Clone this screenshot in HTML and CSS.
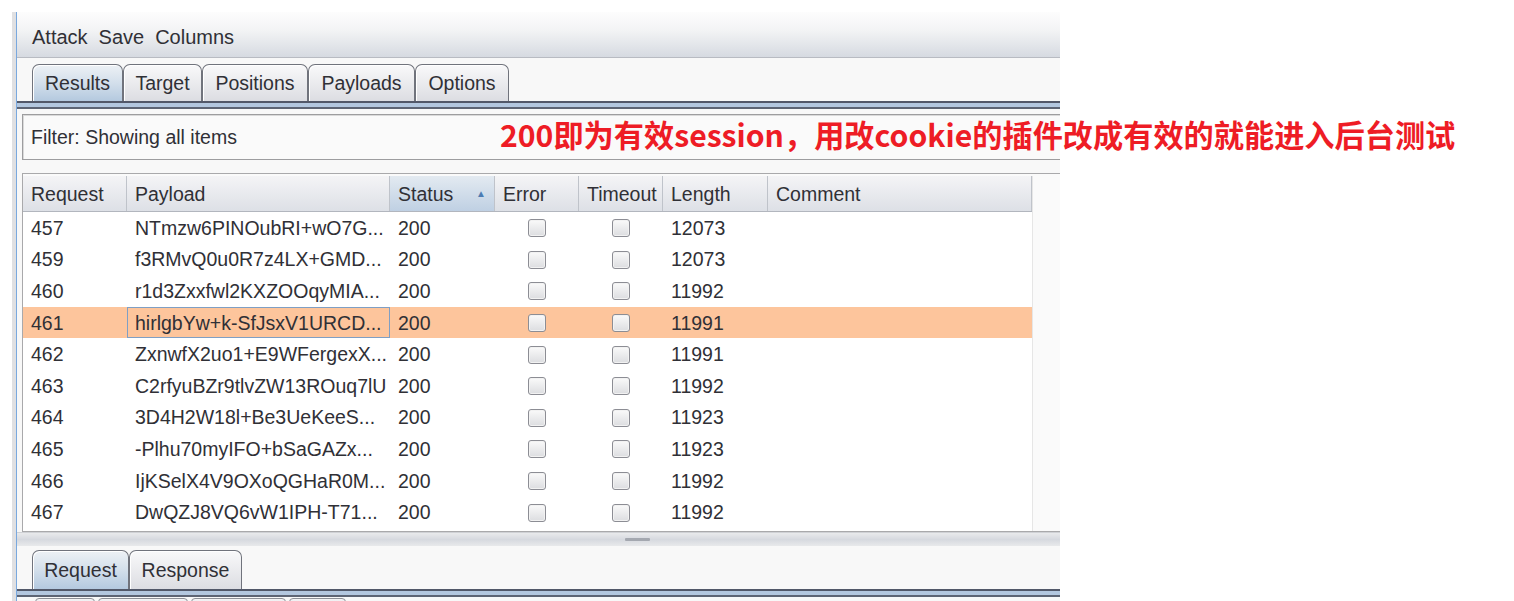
FILE: index.html
```html
<!DOCTYPE html>
<html lang="zh">
<head>
<meta charset="utf-8">
<title>Intruder attack results</title>
<link rel="stylesheet" href="styles.css">
</head>
<body>
<div class="page">
  <div class="window">
    <div class="menubar">
      <span>Attack</span><span>Save</span><span>Columns</span>
    </div>
    <div class="tabstrip">
      <div class="tab sel w-results">Results</div>
      <div class="tab w-target">Target</div>
      <div class="tab w-positions">Positions</div>
      <div class="tab w-payloads">Payloads</div>
      <div class="tab w-options">Options</div>
    </div>
    <div class="band"></div>
    <div class="content">
      <div class="filter">Filter: Showing all items</div>
      <div class="scrollpane">
        <div class="table">
          <div class="row head">
            <div class="cell">Request</div>
            <div class="cell">Payload</div>
            <div class="cell sorted">Status<span class="arrow">▲</span></div>
            <div class="cell">Error</div>
            <div class="cell">Timeout</div>
            <div class="cell">Length</div>
            <div class="cell">Comment</div>
          </div>
          <div class="row"><div class="cell">457</div><div class="cell">NTmzw6PINOubRI+wO7G...</div><div class="cell">200</div><div class="cell c"><i class="cb"></i></div><div class="cell c"><i class="cb"></i></div><div class="cell">12073</div><div class="cell"></div></div>
          <div class="row"><div class="cell">459</div><div class="cell">f3RMvQ0u0R7z4LX+GMD...</div><div class="cell">200</div><div class="cell c"><i class="cb"></i></div><div class="cell c"><i class="cb"></i></div><div class="cell">12073</div><div class="cell"></div></div>
          <div class="row"><div class="cell">460</div><div class="cell">r1d3Zxxfwl2KXZOOqyMIA...</div><div class="cell">200</div><div class="cell c"><i class="cb"></i></div><div class="cell c"><i class="cb"></i></div><div class="cell">11992</div><div class="cell"></div></div>
          <div class="row hl"><div class="cell">461</div><div class="cell focus">hirlgbYw+k-SfJsxV1URCD...</div><div class="cell">200</div><div class="cell c"><i class="cb"></i></div><div class="cell c"><i class="cb"></i></div><div class="cell">11991</div><div class="cell"></div></div>
          <div class="row"><div class="cell">462</div><div class="cell">ZxnwfX2uo1+E9WFergexX...</div><div class="cell">200</div><div class="cell c"><i class="cb"></i></div><div class="cell c"><i class="cb"></i></div><div class="cell">11991</div><div class="cell"></div></div>
          <div class="row"><div class="cell">463</div><div class="cell">C2rfyuBZr9tlvZW13ROuq7lU</div><div class="cell">200</div><div class="cell c"><i class="cb"></i></div><div class="cell c"><i class="cb"></i></div><div class="cell">11992</div><div class="cell"></div></div>
          <div class="row"><div class="cell">464</div><div class="cell">3D4H2W18l+Be3UeKeeS...</div><div class="cell">200</div><div class="cell c"><i class="cb"></i></div><div class="cell c"><i class="cb"></i></div><div class="cell">11923</div><div class="cell"></div></div>
          <div class="row"><div class="cell">465</div><div class="cell">-Plhu70myIFO+bSaGAZx...</div><div class="cell">200</div><div class="cell c"><i class="cb"></i></div><div class="cell c"><i class="cb"></i></div><div class="cell">11923</div><div class="cell"></div></div>
          <div class="row"><div class="cell">466</div><div class="cell">IjKSelX4V9OXoQGHaR0M...</div><div class="cell">200</div><div class="cell c"><i class="cb"></i></div><div class="cell c"><i class="cb"></i></div><div class="cell">11992</div><div class="cell"></div></div>
          <div class="row"><div class="cell">467</div><div class="cell">DwQZJ8VQ6vW1IPH-T71...</div><div class="cell">200</div><div class="cell c"><i class="cb"></i></div><div class="cell c"><i class="cb"></i></div><div class="cell">11992</div><div class="cell"></div></div>
        </div>
        <div class="filler"></div>
      </div>
      <div class="splitter"><span class="grip"></span></div>
    </div>
    <div class="tabstrip bottom">
      <div class="tab sel w-request">Request</div>
      <div class="tab w-response">Response</div>
    </div>
    <div class="band"></div>
    <div class="buttons">
      <span class="btn b1"></span><span class="btn b2"></span><span class="btn b3"></span><span class="btn b4"></span>
    </div>
  </div>
  <div class="note">200即为有效session，用改cookie的插件改成有效的就能进入后台测试</div>
</div>
</body>
</html>
```

FILE: styles.css
```css
* { box-sizing: border-box; }
html, body { margin: 0; padding: 0; background: #ffffff; }
.page {
  position: relative;
  width: 1514px;
  height: 601px;
  overflow: hidden;
  font-family: "Liberation Sans", Arial, sans-serif;
  color: #303036;
}
.window {
  margin: 12px 0 0 12px;
  width: 1048px;
  height: 589px;
  overflow: hidden;
  border-left: 4px solid #e0e0e2;
  box-shadow: inset 1px 0 0 #79a8de;
  padding-left: 1px;
  background: #f8f8f8;
}
.menubar {
  height: 46px;
  display: flex;
  align-items: center;
  gap: 11px;
  padding: 5px 0 0 15px;
  font-size: 20px;
  background: linear-gradient(#fdfdfd 0%, #f3f4f5 40%, #d6dae1 100%);
  border-bottom: 1px solid #b8bbc2;
}
.tabstrip {
  height: 43px;
  display: flex;
  align-items: flex-end;
  padding-left: 15px;
  background: #f8f8f8;
}
.tab {
  height: 37px;
  border: 1px solid #70737c;
  border-bottom: none;
  border-radius: 7px 7px 0 0;
  background: linear-gradient(#f9f9fa, #dcdde2);
  font-size: 19.5px;
  display: flex;
  align-items: center;
  justify-content: center;
  box-shadow: inset 1px 1px 0 #ffffff;
}
.bottom .tab { height: 39px; }
.tab.sel { background: linear-gradient(#edf1f5 0%, #d3dfeb 50%, #b4c9df 100%); }
.w-results { width: 91px; }
.w-target { width: 79px; }
.w-positions { width: 106px; }
.w-payloads { width: 107px; }
.w-options { width: 94px; }
.w-request { width: 97px; }
.w-response { width: 113px; }
.band {
  height: 8px;
  border-top: 2px solid #525869;
  border-bottom: 2px solid #5d6474;
  background: #b3c7df;
}
.content { padding: 5px 0 0 5px; }
.filter {
  height: 46px;
  border: 1px solid #9d9d9f;
  border-right: none;
  box-shadow: inset 1px 1px 0 #dadada;
  background: #fafafa;
  font-size: 19.5px;
  display: flex;
  align-items: center;
  padding-left: 8px;
}
.scrollpane {
  margin-top: 13px;
  display: flex;
  border: 1px solid #a9a9ab;
  border-right: none;
  padding-top: 2px;
  background: #fafafa;
  height: 359px;
}
.table {
  width: 1009px;
  background: #ffffff;
}
.filler { flex: 1; background: #fafafa; border-left: 1px solid #e6e6e6; }
.row {
  display: grid;
  grid-template-columns: 104px 263px 105px 84px 84px 105px 264px;
  height: 31.6px;
  font-size: 19.5px;
}
.row .cell {
  display: flex;
  align-items: center;
  padding: 1px 0 0 8px;
  white-space: nowrap;
  overflow: hidden;
}
.row .cell.c { justify-content: center; padding-left: 0; }
.head {
  height: 36px;
  background: linear-gradient(#f4f4f6, #dde0e6);
  border-bottom: 1px solid #b2b6be;
}
.head .cell { border-right: 1px solid #bfc3ca; }
.head .cell.sorted {
  background: linear-gradient(#e3eaf1, #bfd0e3);
  position: relative;
}
.arrow {
  position: absolute;
  right: 8px;
  top: 12px;
  font-size: 10px;
  color: #4c7cb3;
}
.row.hl { background: #fdc59c; }
.row .cell.focus { border: 1px solid #7f9fc4; padding-left: 7px; }
.cb {
  display: block;
  width: 18px;
  height: 18px;
  border: 1px solid #8c8d94;
  border-radius: 3px;
  background: linear-gradient(#fafafa, #dcdde0);
  box-shadow: inset 0 0 0 1px #f2f2f2;
}
.splitter {
  height: 14px;
  margin-left: -5px;
  background: linear-gradient(#e9eaec, #d6d9df 50%, #e8e9eb);
  border-top: 1px solid #cfd1d5;
  display: flex;
  align-items: center;
}
.grip {
  display: block;
  margin-left: 608px;
  width: 25px;
  height: 3px;
  border-radius: 1px;
  background: #a4a8b0;
}
.buttons {
  display: flex;
  gap: 3px;
  padding: 1px 0 0 18px;
  height: 12px;
}
.btn {
  display: block;
  height: 12px;
  border: 1px solid #8e9098;
  border-radius: 4px;
  background: linear-gradient(#f4f4f6, #dcdde2);
}
.b1 { width: 60px; }
.b2 { width: 90px; }
.b3 { width: 95px; }
.b4 { width: 57px; }
.note {
  position: absolute;
  left: 500px;
  top: 115px;
  font-family: "Noto Sans CJK SC", sans-serif;
  font-weight: 700;
  font-size: 30.2px;
  line-height: 38px;
  color: #ee1c25;
  white-space: nowrap;
}
```
